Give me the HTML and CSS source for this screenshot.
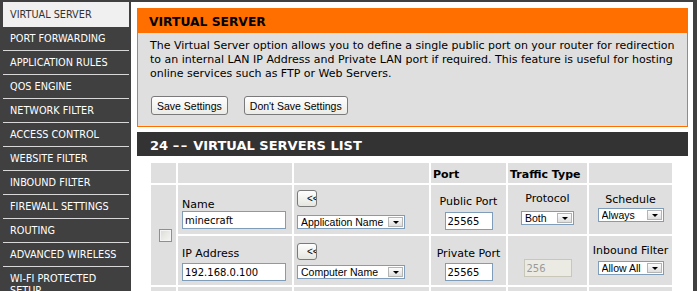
FILE: index.html
```html
<!DOCTYPE html>
<html lang="en">
<head>
<meta charset="utf-8">
<title>Virtual Server</title>
<link rel="stylesheet" href="styles.css">
</head>
<body>
<div class="page">
  <nav class="side">
    <a class="item active">VIRTUAL SERVER</a>
    <a class="item">PORT FORWARDING</a>
    <a class="item">APPLICATION RULES</a>
    <a class="item">QOS ENGINE</a>
    <a class="item">NETWORK FILTER</a>
    <a class="item">ACCESS CONTROL</a>
    <a class="item">WEBSITE FILTER</a>
    <a class="item">INBOUND FILTER</a>
    <a class="item">FIREWALL SETTINGS</a>
    <a class="item">ROUTING</a>
    <a class="item">ADVANCED WIRELESS</a>
    <a class="item">WI-FI PROTECTED SETUP</a>
  </nav>
  <main class="main">
    <section class="box">
      <h1 class="box-title">VIRTUAL SERVER</h1>
      <div class="box-body">
        <p class="intro">The Virtual Server option allows you to define a single public port on your router for redirection<br>to an internal LAN IP Address and Private LAN port if required. This feature is useful for hosting<br>online services such as FTP or Web Servers.</p>
        <div class="actions">
          <button class="btn" type="button">Save Settings</button>
          <button class="btn" type="button">Don't Save Settings</button>
        </div>
      </div>
    </section>
    <section class="list">
      <h2 class="list-title">24 <span class="dash">&ndash;&ndash;</span> VIRTUAL SERVERS LIST</h2>
      <table class="vs">
        <colgroup>
          <col class="k1"><col class="k2"><col class="k3"><col class="k4"><col class="k5"><col class="k6">
        </colgroup>
        <tr class="head">
          <td></td><td></td><td></td><td class="th">Port</td><td class="th">Traffic Type</td><td></td>
        </tr>
        <tr class="entry">
          <td class="chk" rowspan="2"><input class="cb" type="checkbox"></td>
          <td class="c2 r2"><div class="lab">Name</div><input class="txt w104" type="text" value="minecraft"></td>
          <td class="c3 r2"><button class="mini" type="button">&lt;&lt;</button><span class="sel w108"><select><option>Application Name</option></select><span class="arr"></span></span></td>
          <td class="cc c4 r2"><div class="lab">Public Port</div><input class="txt w48" type="text" value="25565"></td>
          <td class="cc c5 r2"><div class="lab">Protocol</div><span class="sel w53"><select><option>Both</option></select><span class="arr"></span></span></td>
          <td class="cc c6 r2"><div class="lab">Schedule</div><span class="sel w66"><select><option>Always</option></select><span class="arr"></span></span></td>
        </tr>
        <tr class="entry">
          <td class="c2 r3"><div class="lab">IP Address</div><input class="txt w104" type="text" value="192.168.0.100"></td>
          <td class="c3 r3"><button class="mini" type="button">&lt;&lt;</button><span class="sel w108"><select><option>Computer Name</option></select><span class="arr"></span></span></td>
          <td class="cc c4 r3"><div class="lab">Private Port</div><input class="txt w48" type="text" value="25565"></td>
          <td class="cc c5 r3"><input class="txt w48 off" type="text" value="256" disabled></td>
          <td class="cc c6 r3"><div class="lab">Inbound Filter</div><span class="sel w66"><select><option>Allow All</option></select><span class="arr"></span></span></td>
        </tr>
        <tr class="entry">
          <td class="chk" rowspan="2"></td>
          <td></td><td></td><td></td><td></td><td></td>
        </tr>
        <tr class="entry">
          <td></td><td></td><td></td><td></td><td></td>
        </tr>
      </table>
    </section>
  </main>
</div>
</body>
</html>
```
FILE: styles.css
```css
html, body {
  margin: 0;
  height: 100%;
  overflow: hidden;
}

body {
  background: #404040;
  font-family: "DejaVu Sans", Verdana, sans-serif;
  font-size: 11px;
  color: #000;
}

.page {
  display: flex;
  align-items: flex-start;
  padding-top: 2px;
}

/* ---------- sidebar ---------- */
.side {
  flex: none;
  width: 126px;
  margin-left: 3px;
}

.item {
  display: block;
  padding: 6px 0 5px 7px;
  line-height: 12px;
  border-bottom: 1px solid #d8d8d8;
  color: #fff;
  font-family: "DejaVu Sans Condensed", "DejaVu Sans", sans-serif;
  font-stretch: condensed;
  font-size: 10.8px;
  text-decoration: none;
}

.item:first-child {
  padding-top: 7px;
}

.item.active {
  background: #f0f0f0;
  color: #333;
  border-bottom-color: #f0f0f0;
}

/* ---------- main panel ---------- */
.main {
  flex: none;
  box-sizing: border-box;
  width: 562px;
  min-height: 600px;
  margin-left: 2px;
  padding: 6px 5px 0 6px;
  background: #fff;
}

.box {
  border: 1px solid #ff6f00;
}

.box-title {
  margin: 0;
  padding: 3px 0 0 11px;
  line-height: 21px;
  background: #ff6f00;
  font-size: 12.3px;
  font-weight: bold;
  color: #000;
}

.box-body {
  background: #dfdfdf;
  padding: 6px 2px 11px 12px;
}

.intro {
  margin: 0;
  line-height: 14px;
  white-space: nowrap;
}

.actions {
  display: flex;
  gap: 16px;
  margin-top: 15px;
  padding-left: 1px;
}

.btn {
  box-sizing: border-box;
  height: 19px;
  padding: 0 5px;
  border: 1px solid #7a7a7a;
  border-radius: 3px;
  background: linear-gradient(#fefefe, #ebebe7);
  font-family: "Liberation Sans", Arial, sans-serif;
  font-size: 10.5px;
  color: #000;
}

.list {
  margin-top: 5px;
}

.list-title {
  margin: 0;
  padding: 3px 0 0 13px;
  line-height: 21px;
  background: #333;
  color: #fff;
  font-size: 13px;
  font-weight: bold;
}

.dash {
  letter-spacing: 1.5px;
}

/* ---------- table ---------- */
.vs {
  border-collapse: separate;
  border-spacing: 2px;
  table-layout: fixed;
  width: 525px;
  margin: 5px 0 0 12px;
}

.k1 { width: 25px; }
.k2 { width: 114px; }
.k3 { width: 135px; }
.k4 { width: 75px; }
.k5 { width: 79px; }
.k6 { width: 83px; }

.vs td {
  background: #dfdfdf;
  padding: 0;
  vertical-align: top;
}

.head td {
  height: 20px;
}

.vs td.th {
  padding: 4px 2px 0;
  line-height: 16px;
  height: 16px;
  font-weight: bold;
}

.entry {
  height: 49px;
}

.vs td.chk {
  vertical-align: middle;
  padding-left: 8px;
}

.lab {
  line-height: 12px;
  height: 12px;
  white-space: nowrap;
}

.vs td.cc {
  text-align: center;
}

.vs td.c2 { padding-left: 4px; }
.vs td.c3 { padding-left: 3px; }

.vs td.c2.r2 { padding-top: 14px; }
.vs td.c2.r3 { padding-top: 12px; }
.c2.r3 .txt { margin-top: 3px; }

.vs td.c3.r2 { padding-top: 5px; }
.c3.r2 .sel { margin-top: 8px; }
.vs td.c3.r3 { padding-top: 7px; }
.c3.r3 .sel { margin-top: 5px; }

.vs td.c4.r2 { padding-top: 11px; }
.c4.r2 .txt { margin-top: 4px; }
.vs td.c4.r3 { padding-top: 12px; }
.c4.r3 .txt { margin-top: 3px; }

.vs td.c5.r2 { padding-top: 8px; }
.c5.r2 .sel { margin-top: 6px; }
.vs td.c5.r3 { padding-top: 23px; }

.vs td.c6.r2 { padding-top: 9px; }
.c6.r2 .sel { margin-top: 2px; }
.vs td.c6.r3 { padding-top: 9px; }
.c6.r3 .sel { margin-top: 4px; }

/* form controls */
.cb {
  appearance: none;
  -webkit-appearance: none;
  display: block;
  box-sizing: border-box;
  width: 13px;
  height: 13px;
  margin: 0;
  border: 1px solid #8f8f8f;
  background: linear-gradient(135deg, #dcdcd6, #f6f6f4);
  box-shadow: inset 0 0 0 1px #f4f4f4;
}

.txt {
  display: block;
  box-sizing: border-box;
  height: 18px;
  margin: 0;
  padding: 0 2px;
  border: 1px solid #7f9db9;
  background: #fff;
  font-family: "DejaVu Sans", Verdana, sans-serif;
  font-size: 10px;
  color: #000;
}

.cc .txt {
  margin-left: auto;
  margin-right: auto;
}

.txt.off {
  background: #ebebe4;
  border-color: #c9c7ba;
  color: #9a9a9a;
}

.w104 { width: 104px; }
.w48 { width: 48px; }
.w108 { width: 108px; }
.w53 { width: 53px; }
.w66 { width: 66px; }

.mini {
  display: block;
  box-sizing: border-box;
  width: 20px;
  height: 17px;
  padding: 0 0 0 9px;
  overflow: hidden;
  white-space: nowrap;
  text-align: left;
  border: 1px solid #7a7a7a;
  border-radius: 3px;
  background: linear-gradient(#fefefe, #e6e6e0);
  font-family: "Liberation Sans", Arial, sans-serif;
  font-size: 10px;
  color: #000;
}

.sel {
  position: relative;
  display: block;
  height: 14px;
}

.cc .sel {
  margin-left: auto;
  margin-right: auto;
}

.sel select {
  appearance: none;
  -webkit-appearance: none;
  box-sizing: border-box;
  display: block;
  width: 100%;
  height: 14px;
  margin: 0;
  padding: 0 0 0 3px;
  border: 1px solid #7f9db9;
  border-radius: 0;
  background: #fff;
  font-family: "Liberation Sans", Arial, sans-serif;
  font-size: 10.5px;
  line-height: 12px;
  color: #000;
  text-align: left;
}

.arr {
  position: absolute;
  top: 2px;
  right: 2px;
  width: 15px;
  height: 10px;
  box-sizing: border-box;
  border: 1px solid #b4b4b4;
  background: linear-gradient(#fdfdfd, #dedede);
}

.arr::after {
  content: "";
  position: absolute;
  left: 4px;
  top: 3px;
  border-left: 3px solid transparent;
  border-right: 3px solid transparent;
  border-top: 3px solid #000;
}
```
